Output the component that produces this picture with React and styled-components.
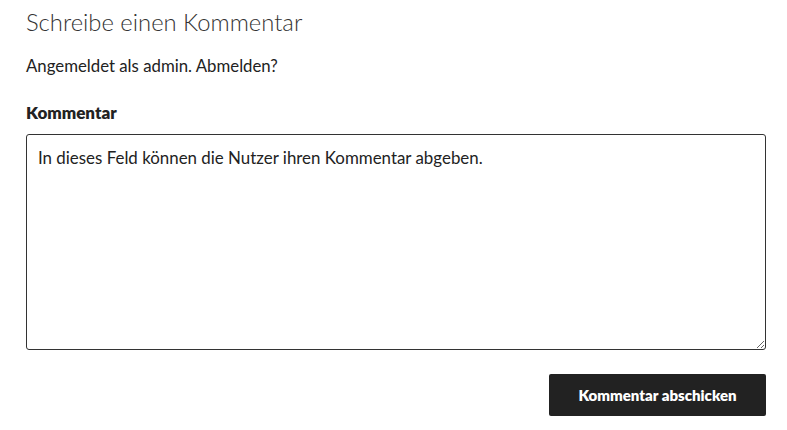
import { useEffect, useRef } from 'react'
import styled, { createGlobalStyle } from 'styled-components'

const Global = createGlobalStyle`
	body {
		margin: 0;
		background: #fff;
		font-family: Lato, 'Noto Sans', sans-serif;
		color: #222;
	}
`
const Form = styled.form`
	width: 740px;
	padding: 8px 0 0 26px;
	display: flex;
	flex-direction: column;
`
const Title = styled.h3`
	margin: 0;
	font-size: 23.8px;
	font-weight: 300;
	color: #333;
	line-height: 28px;
`
const Note = styled.p`
	margin: 19px 0 0;
	font-size: 16.8px;
	line-height: 22px;
	color: #222;
`
const Label = styled.label`
	margin-top: 25px;
	font-size: 17px;
	font-weight: 800;
	line-height: 22px;
	color: #222;
`
const Area = styled.textarea`
	margin-top: 10px;
	box-sizing: border-box;
	width: 740px;
	height: 216px;
	border: 1px solid #333;
	border-radius: 3px;
	padding: 12px 11px 13px;
	font-family: Lato, 'Noto Sans', sans-serif;
	font-size: 16.9px;
	line-height: 22px;
	color: #222;
	resize: vertical;
	outline: none;
	caret-color: #222;
`
const Row = styled.div`
	display: flex;
	justify-content: flex-end;
	margin-top: 24px;
`
const Submit = styled.button`
	width: 217px;
	height: 42px;
	border: 0;
	border-radius: 2px;
	background: #222;
	color: #fff;
	font-family: Lato, 'Noto Sans', sans-serif;
	font-size: 15px;
	font-weight: 800;
	cursor: pointer;
`

const App = () => {
	const ref = useRef(null)
	useEffect(() => {
		const el = ref.current
		el.focus()
		el.setSelectionRange(el.value.length, el.value.length)
	}, [])

	return (
		<>
			<Global />
			<Form onSubmit={(e) => e.preventDefault()}>
				<Title>Schreibe einen Kommentar</Title>
				<Note>Angemeldet als admin. Abmelden?</Note>
				<Label htmlFor='comment'>Kommentar</Label>
				<Area
					ref={ref}
					id='comment'
					defaultValue='In dieses Feld können die Nutzer ihren Kommentar abgeben.'
				/>
				<Row>
					<Submit type='submit'>Kommentar abschicken</Submit>
				</Row>
			</Form>
		</>
	)
}
export default App
